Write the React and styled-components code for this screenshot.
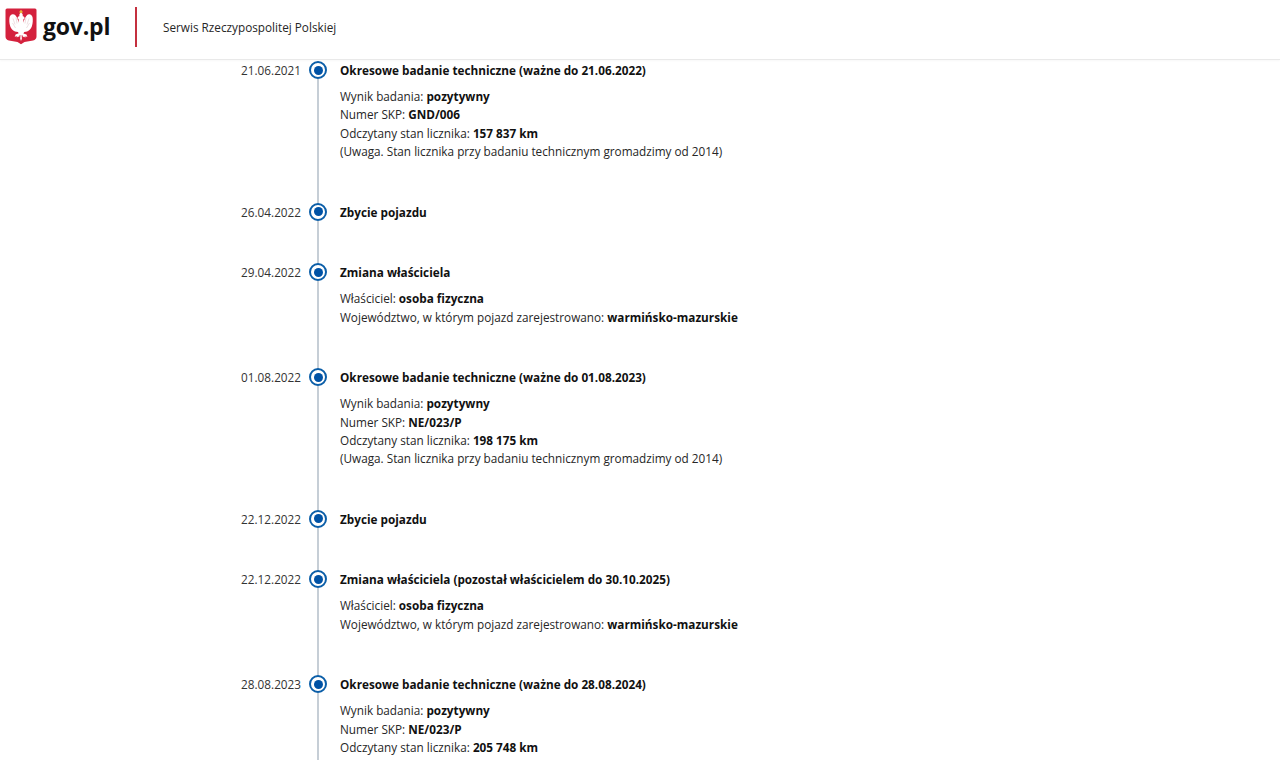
import React from 'react';
import styled, { createGlobalStyle } from 'styled-components';

const GlobalStyle = createGlobalStyle`
    html, body {
        margin: 0;
        height: 100%;
        overflow: hidden;
        background: #ffffff;
        font-family: "Open Sans", "Liberation Sans", sans-serif;
        color: #1b1b1b;
    }
`;

const Page = styled.div`
    height: 760px;
    overflow: hidden;
`;

const Header = styled.header`
    display: flex;
    align-items: center;
    height: 59px;
    padding-left: 5px;
    border-bottom: 1px solid #e9e9e9;
    box-shadow: 0 1px 2px rgba(0, 0, 0, .03);
`;

const Logo = styled.div`
    display: flex;
    align-items: center;
    gap: 6px;
    width: 130px;
    height: 40px;
    margin-top: -7px;
`;

const LogoText = styled.span`
    font-size: 23px;
    font-weight: 700;
    line-height: 40px;
    color: #111111;
    letter-spacing: -0.2px;
`;

const Divider = styled.div`
    width: 2px;
    height: 40px;
    margin-top: -5px;
    background: #c4303f;
`;

const ServiceName = styled.span`
    margin-left: 26px;
    margin-top: -6px;
    font-size: 11.75px;
    color: #262626;
`;

const Timeline = styled.ol`
    list-style: none;
    margin: 0;
    padding: 1px 0 0 230px;
`;

const Row = styled.li`
    display: grid;
    grid-template-columns: 71px 18px 1fr;
    column-gap: 8px;
`;

const Date = styled.div`
    text-align: right;
    font-size: 11.75px;
    line-height: 18.4px;
    color: #333333;
`;

const Marker = styled.div`
    display: flex;
    flex-direction: column;
    align-items: center;
`;

const Dot = styled.span`
    flex: none;
    box-sizing: border-box;
    width: 18px;
    height: 18px;
    border: 2px solid #0b5ea8;
    border-radius: 50%;
    background: #ffffff;
    display: flex;
    align-items: center;
    justify-content: center;

    &::after {
        content: "";
        width: 9px;
        height: 9px;
        border-radius: 50%;
        background: #0052a5;
    }
`;

const Line = styled.span`
    flex: 1;
    width: 2px;
    background: #c6ced6;
`;

const Content = styled.div`
    margin-left: 5px;
    padding-bottom: 42.1px;
    font-size: 11.75px;
    line-height: 18.4px;
`;

const Title = styled.div`
    font-weight: 700;
    color: #111111;
`;

const Details = styled.div`
    margin-top: 7.6px;
    color: #262626;

    b {
        font-weight: 700;
        color: #111111;
    }
`;

const Eagle = () => (
    <svg width="32" height="37" viewBox="0 0 32 37">
        <path d="M2 .5h28A1.500 1.500 0 0 1 31.500 2v26.500c0 2.200-1.200 3.400-3.400 3.900l-8.600 1.600-3.500 2.200-3.500-2.200-8.600-1.600C1.700 31.900.5 30.700.5 28.500V2A1.500 1.500 0 0 1 2 .5z" fill="#d4213d" />
        <path d="M16 4.600l1.600 1.500.2 2.200c1.300.2 2 1.100 1.700 2.400l-1 .3-.2 3.800c.6-1.800 1.400-5.100 3.200-7.100 1-1.100 2.300-1.600 3.600-1.200 1.300.3 2 1.300 2.400 2.600.5 2.500.4 6.200-.6 9.200-.7 2.100-2.200 4.200-4.800 5.200l-2.900.5-.8 1.400 3.100 1.100.9 2.600-1.800-.9-.4 1.500-1.100-1.200-1.200.7-.2-1.700-1.100-.3.3 3.600L16 33l-.8-2.300.3-3.600-1.100.3-.2 1.700-1.200-.7-1.100 1.200-.4-1.500-1.800.9.9-2.600 3.100-1.100-.8-1.400-2.900-.5c-2.600-1-4.100-3.100-4.800-5.200-1-3-1.100-6.700-.6-9.200.4-1.300 1.100-2.300 2.400-2.600 1.300-.4 2.600.1 3.600 1.200 1.800 2 2.600 5.300 3.200 7.100l-.2-3.800-1-.3c-.3-1.300.4-2.200 1.700-2.400l.2-2.200z" fill="#ffffff" />
        <path d="M14.400 3.400l1.600-1.600 1.600 1.600-.3 1.600h-2.600z" fill="#e8b23a" />
        <path d="M8 10.500l2 6M11 9.500l1 6M24 10.500l-2 6M21 9.500l-1 6M7.500 15l3 5M24.500 15l-3 5" stroke="#e3c9cc" strokeWidth=".6" fill="none" />
    </svg>
);

const events = [
    {
        date: '21.06.2021',
        title: 'Okresowe badanie techniczne (ważne do 21.06.2022)',
        details: [
            ['Wynik badania: ', 'pozytywny'],
            ['Numer SKP: ', 'GND/006'],
            ['Odczytany stan licznika: ', '157 837 km'],
            ['(Uwaga. Stan licznika przy badaniu technicznym gromadzimy od 2014)'],
        ],
    },
    { date: '26.04.2022', title: 'Zbycie pojazdu' },
    {
        date: '29.04.2022',
        title: 'Zmiana właściciela',
        details: [
            ['Właściciel: ', 'osoba fizyczna'],
            ['Województwo, w którym pojazd zarejestrowano: ', 'warmińsko-mazurskie'],
        ],
    },
    {
        date: '01.08.2022',
        title: 'Okresowe badanie techniczne (ważne do 01.08.2023)',
        details: [
            ['Wynik badania: ', 'pozytywny'],
            ['Numer SKP: ', 'NE/023/P'],
            ['Odczytany stan licznika: ', '198 175 km'],
            ['(Uwaga. Stan licznika przy badaniu technicznym gromadzimy od 2014)'],
        ],
    },
    { date: '22.12.2022', title: 'Zbycie pojazdu' },
    {
        date: '22.12.2022',
        title: 'Zmiana właściciela (pozostał właścicielem do 30.10.2025)',
        details: [
            ['Właściciel: ', 'osoba fizyczna'],
            ['Województwo, w którym pojazd zarejestrowano: ', 'warmińsko-mazurskie'],
        ],
    },
    {
        date: '28.08.2023',
        title: 'Okresowe badanie techniczne (ważne do 28.08.2024)',
        details: [
            ['Wynik badania: ', 'pozytywny'],
            ['Numer SKP: ', 'NE/023/P'],
            ['Odczytany stan licznika: ', '205 748 km'],
        ],
    },
];

export default function App() {
    return (
        <Page>
            <GlobalStyle />
            <Header>
                <Logo>
                    <Eagle />
                    <LogoText>gov.pl</LogoText>
                </Logo>
                <Divider />
                <ServiceName>Serwis Rzeczypospolitej Polskiej</ServiceName>
            </Header>
            <Timeline>
                {events.map((event, i) => (
                    <Row key={i}>
                        <Date>{event.date}</Date>
                        <Marker>
                            <Dot />
                            <Line />
                        </Marker>
                        <Content>
                            <Title>{event.title}</Title>
                            {event.details && (
                                <Details>
                                    {event.details.map(([label, value], j) => (
                                        <div key={j}>
                                            {label}
                                            {value && <b>{value}</b>}
                                        </div>
                                    ))}
                                </Details>
                            )}
                        </Content>
                    </Row>
                ))}
            </Timeline>
        </Page>
    );
}
